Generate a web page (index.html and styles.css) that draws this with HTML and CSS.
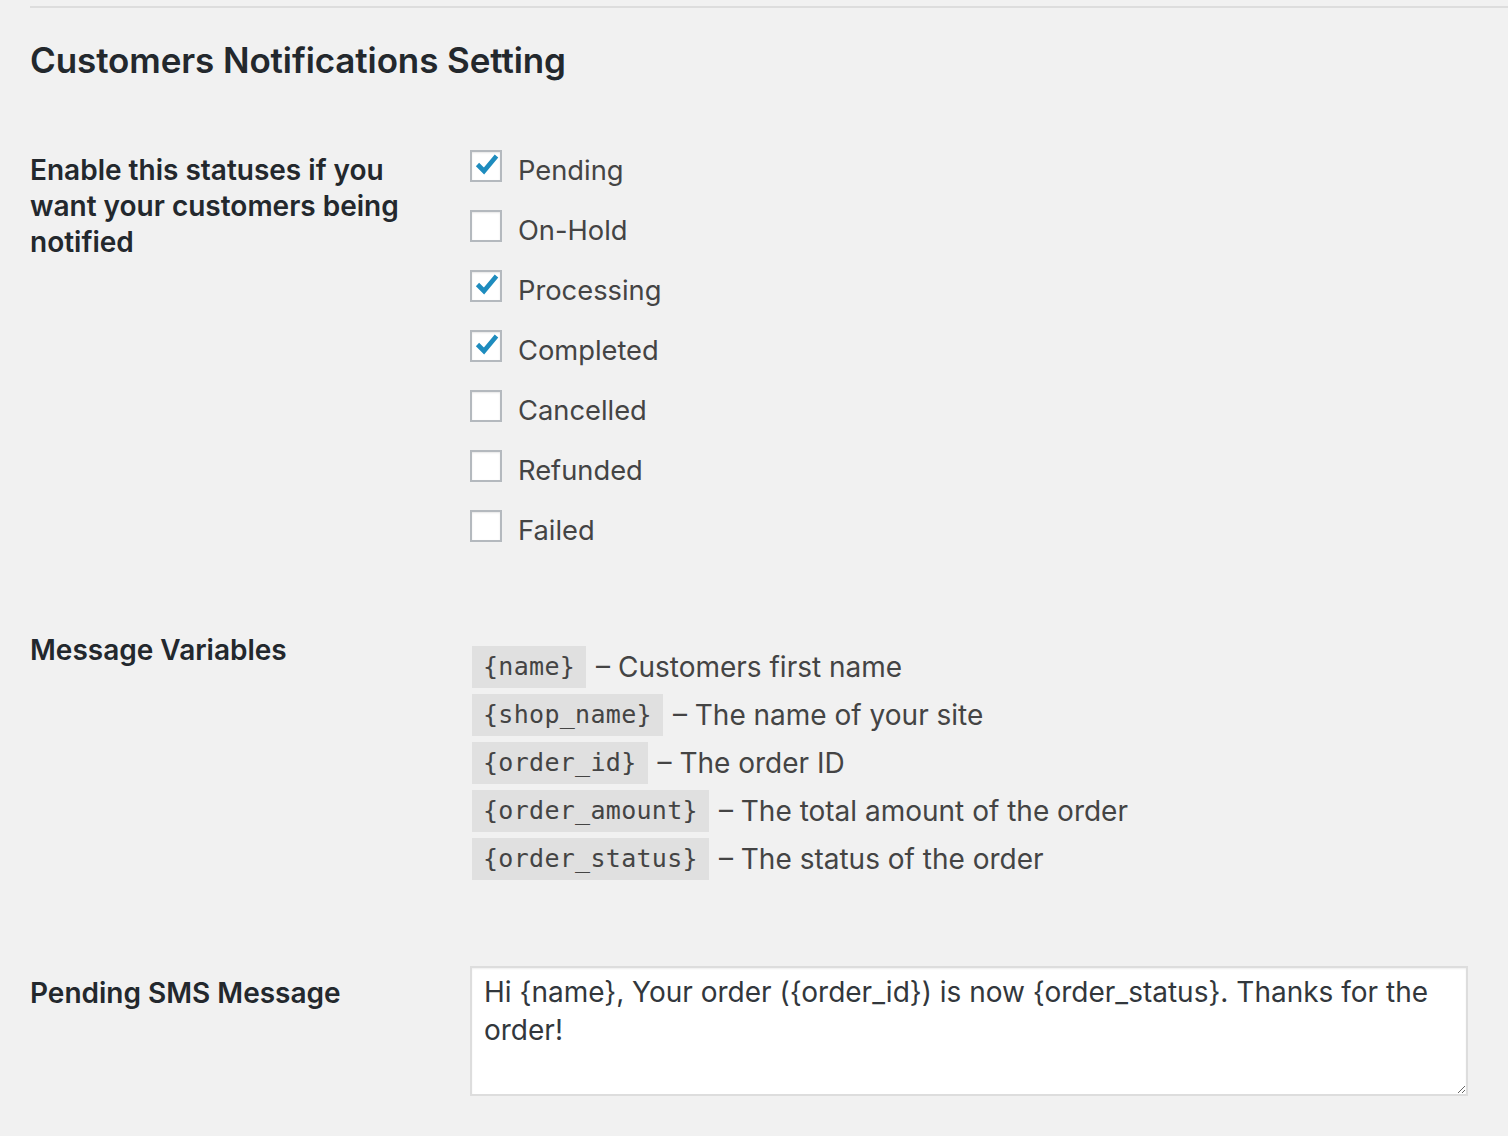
FILE: index.html
```html
<!DOCTYPE html>
<html lang="en">
<head>
<meta charset="utf-8">
<title>Customers Notifications Setting</title>
<link rel="stylesheet" href="styles.css">
</head>
<body>
<div class="wrap">
  <hr class="sep">
  <h2 class="title">Customers Notifications Setting</h2>

  <div class="row row-statuses">
    <div class="th">Enable this statuses if you want your customers being notified</div>
    <div class="td">
      <ul class="checks">
        <li class="check-item"><span class="box"><svg class="tick" viewBox="0 0 24 24" width="26" height="24"><path d="M2.5 11.5 L9 18 L21.5 3" fill="none" stroke="#1e8cbe" stroke-width="4.6" stroke-linecap="butt" stroke-linejoin="miter"/></svg></span><span class="lbl">Pending</span></li>
        <li class="check-item"><span class="box"></span><span class="lbl">On-Hold</span></li>
        <li class="check-item"><span class="box"><svg class="tick" viewBox="0 0 24 24" width="26" height="24"><path d="M2.5 11.5 L9 18 L21.5 3" fill="none" stroke="#1e8cbe" stroke-width="4.6" stroke-linecap="butt" stroke-linejoin="miter"/></svg></span><span class="lbl">Processing</span></li>
        <li class="check-item"><span class="box"><svg class="tick" viewBox="0 0 24 24" width="26" height="24"><path d="M2.5 11.5 L9 18 L21.5 3" fill="none" stroke="#1e8cbe" stroke-width="4.6" stroke-linecap="butt" stroke-linejoin="miter"/></svg></span><span class="lbl">Completed</span></li>
        <li class="check-item"><span class="box"></span><span class="lbl">Cancelled</span></li>
        <li class="check-item"><span class="box"></span><span class="lbl">Refunded</span></li>
        <li class="check-item"><span class="box"></span><span class="lbl">Failed</span></li>
      </ul>
    </div>
  </div>

  <div class="row row-vars">
    <div class="th">Message Variables</div>
    <div class="td">
      <ul class="vars">
        <li class="var"><code>{name}</code><span class="desc">– Customers first name</span></li>
        <li class="var"><code>{shop_name}</code><span class="desc">– The name of your site</span></li>
        <li class="var"><code>{order_id}</code><span class="desc">– The order ID</span></li>
        <li class="var"><code>{order_amount}</code><span class="desc">– The total amount of the order</span></li>
        <li class="var"><code>{order_status}</code><span class="desc">– The status of the order</span></li>
      </ul>
    </div>
  </div>

  <div class="row row-sms">
    <div class="th">Pending SMS Message</div>
    <div class="td">
      <textarea class="sms">Hi {name}, Your order ({order_id}) is now {order_status}. Thanks for the order!</textarea>
    </div>
  </div>
</div>
</body>
</html>
```

FILE: styles.css
```css
html, body {
  margin: 0;
  padding: 0;
  background: #f1f1f1;
}
body {
  font-family: Inter, "Open Sans", Roboto, sans-serif;
  color: #444;
  height: 1136px;
  overflow: hidden;
}
.wrap {
  padding-left: 30px;
  padding-top: 6px;
}
.sep {
  margin: 0;
  border: 0;
  border-top: 2px solid #dddddd;
  height: 0;
}
.title {
  margin: 31px 0 0 0;
  font-size: 35px;
  line-height: 42px;
  font-weight: 600;
  color: #23282d;
  letter-spacing: -0.1px;
}
.row {
  display: flex;
  align-items: flex-start;
}
.th {
  width: 400px;
  margin-right: 40px;
  font-size: 28px;
  line-height: 36px;
  font-weight: 600;
  color: #23282d;
}
.td {
  flex: 1;
}
.row-statuses {
  margin-top: 69px;
}
.row-statuses .th {
  padding-top: 2px;
}
.checks {
  list-style: none;
  margin: 0;
  padding: 0;
  display: flex;
  flex-direction: column;
  gap: 20px;
}
.check-item {
  display: flex;
  align-items: flex-start;
  height: 40px;
}
.box {
  position: relative;
  width: 28px;
  height: 28px;
  border: 2px solid #b4b9be;
  background: #fff;
  box-shadow: inset 0 1px 2px rgba(0, 0, 0, 0.1);
  flex: none;
}
.tick {
  position: absolute;
  left: 2px;
  top: 1px;
}
.lbl {
  margin-left: 16px;
  font-size: 27.3px;
  line-height: 41px;
  color: #444;
}
.row-vars {
  margin-top: 82px;
}
.row-vars .td {
  padding-top: 14px;
}
.vars {
  list-style: none;
  margin: 0;
  padding: 0 0 0 2px;
  display: flex;
  flex-direction: column;
  gap: 6px;
}
.var {
  display: flex;
  align-items: center;
  height: 42px;
}
code {
  font-family: "DejaVu Sans Mono", "Liberation Mono", monospace;
  font-size: 25px;
  line-height: 42px;
  height: 42px;
  padding: 0 11px;
  background: rgba(0, 0, 0, 0.07);
  color: #444;
  letter-spacing: 0.3px;
}
.desc {
  margin-left: 10px;
  font-size: 28px;
  line-height: 44px;
  color: #444;
}
.row-sms {
  margin-top: 86px;
}
.row-sms .th {
  padding-top: 9px;
}
.sms {
  display: block;
  box-sizing: border-box;
  width: 998px;
  height: 130px;
  margin: 0;
  padding: 5px 12px;
  border: 2px solid #dddddd;
  background: #fff;
  box-shadow: inset 0 1px 2px rgba(0, 0, 0, 0.07);
  font-family: Inter, "Open Sans", Roboto, sans-serif;
  font-size: 28px;
  line-height: 38px;
  color: #32373c;
  resize: vertical;
  outline: none;
}
```
